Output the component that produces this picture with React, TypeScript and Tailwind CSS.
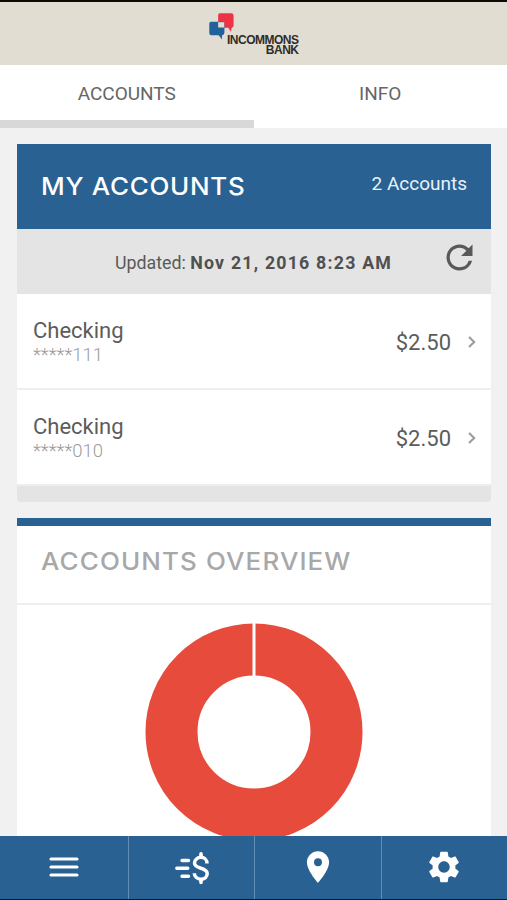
import { MdPlace, MdRefresh, MdSettings } from "react-icons/md";

const accounts = [
  { name: "Checking", number: "*****111", balance: "$2.50" },
  { name: "Checking", number: "*****010", balance: "$2.50" },
];

const BankLogo = () => (
  <div className="relative w-[92px] h-[44px]">
    <svg viewBox="0 0 28 30" className="absolute left-px top-0 w-[27px] h-[29px]">
      <path d="M11 .3h12q2.500 0 2.500 2.500v10q0 2-2 2.500l-.8 4-2.700-4H11q-1.500 0-1.500-2V2.300q0-2 1.500-2z" fill="#ef3346" />
      <path d="M2 9h12q2 0 2 2v9q0 2.500-2 3h-.5v4.500l-3.500-4.500H2.500Q.3 23 .3 21V11q0-2 1.700-2z" fill="#22629a" />
      <path d="M9.500 9.500h6.300v5.500H9.500z" fill="#e1ddd3" />
    </svg>
    <div className="absolute right-px top-[22px] flex flex-col items-end font-['Liberation_Sans',sans-serif] font-bold text-[12px] tracking-[-0.5px] text-[#302c28]">
      <p className="h-[10px] leading-[10px]">INCOMMONS</p>
      <p className="h-[10px] leading-[10px]">BANK</p>
    </div>
  </div>
);

const MenuIcon = () => (
  <svg viewBox="0 0 30 20" className="w-[30px] h-[20px] mb-0.5" stroke="white" strokeWidth="3.100" strokeLinecap="round">
    <path d="M2 2h26M2 10h26M2 18h26" />
  </svg>
);

const TransferIcon = () => (
  <svg viewBox="0 0 36 34" className="w-[36px] h-[34px]" fill="none" stroke="white" strokeLinecap="round">
    <path d="M9 9.500h6.500M3.800 17.300h11M9 25.200h6.500" strokeWidth="3.400" />
    <path d="M34 12.500C34 9 31.500 6.300 28 6.300S21.500 8.800 21.500 12c0 6.500 12.700 4 12.700 10.500 0 3.300-2.700 5.700-6.200 5.700s-6.700-2.500-6.700-6" strokeWidth="3.500" strokeLinecap="butt" />
    <path d="M28 2.800v3M28 28.500v3" strokeWidth="3.600" />
  </svg>
);

const Chevron = () => (
  <svg viewBox="0 0 8 12" className="w-[8px] h-[12px]" fill="none" stroke="#9a9a9a" strokeWidth="2">
    <path d="M1 1l5.200 5L1 11" />
  </svg>
);

const AccountRow: React.FC<{ name: string; number: string; balance: string }> = ({ name, number, balance }) => (
  <div className="flex items-center justify-between h-[96px] pt-[2px] pl-4 pr-[15px] bg-white border-b-2 border-[#eeeeee]">
    <div>
      <p className="text-[22px] leading-[25px] text-[#5c5c5c]">{name}</p>
      <p className="text-[18.500px] leading-[24px] font-light text-[#9c9c9c]">{number}</p>
    </div>
    <div className="flex items-center gap-[17px]">
      <span className="text-[22px] text-[#5c5c5c]">{balance}</span>
      <Chevron />
    </div>
  </div>
);

const OverviewChart = () => (
  <svg viewBox="0 0 218 218" className="w-[218px] h-[218px]">
    <circle cx="109" cy="109" r="82.500" fill="none" stroke="#e64b3b" strokeWidth="52" />
    <path d="M109 0v54" stroke="white" strokeWidth="3" />
  </svg>
);

const BottomNav = () => (
  <nav className="shrink-0 h-[64px] grid grid-cols-[128.500px_126px_127px_1fr] bg-[#286192] border-b border-[#0b1c2b] text-white">
    <button aria-label="Menu" className="flex items-center justify-center border-r border-[#5f8db5]">
      <MenuIcon />
    </button>
    <button aria-label="Transfers" className="flex items-center justify-center border-r border-[#5f8db5]">
      <TransferIcon />
    </button>
    <button aria-label="Locations" className="flex items-center justify-center border-r border-[#5f8db5]">
      <MdPlace size={38} className="mb-0.5" />
    </button>
    <button aria-label="Settings" className="flex items-center justify-center">
      <MdSettings size={38} className="mb-0.5" />
    </button>
  </nav>
);

export default function App() {
  return (
    <div className="flex flex-col w-[507px] h-[900px] overflow-hidden bg-[#f1f1f1] font-[Roboto,sans-serif]">
      <header className="shrink-0 flex justify-center h-[65px] pt-[11px] bg-[#e1ddd3] border-t-2 border-[#0d0a08]">
        <BankLogo />
      </header>

      <div className="shrink-0 grid grid-cols-2 h-[63px] bg-white text-[19px] text-[#666666] text-center">
        <div className="h-[63px] pt-px leading-[55px] border-b-8 border-[#d8d8d8]">ACCOUNTS</div>
        <div className="pt-px leading-[55px]">INFO</div>
      </div>

      <main className="flex-1 min-h-0 overflow-hidden px-4 pt-4">
        <section className="ml-px">
          <div className="flex justify-between h-[85px] px-6 bg-[#286192] text-white">
            <h2 className="origin-left scale-x-106 font-[Inter,sans-serif] font-medium text-[24.500px] leading-[85px] tracking-[0.650px] whitespace-nowrap">MY ACCOUNTS</h2>
            <span className="text-[19px] leading-[79px] text-[#e8f1fa]">2 Accounts</span>
          </div>
          <div className="flex items-center h-[65px] bg-[#e4e4e4] text-[#595959]">
            <p className="flex-1 pl-[98px] pt-[3px] text-[17.800px] whitespace-nowrap">
              Updated: <b className="tracking-[1.200px] text-[#505050]">Nov 21, 2016 8:23 AM</b>
            </p>
            <MdRefresh size={39} className="mr-3 mb-2" />
          </div>
          {accounts.map((account) => (
            <AccountRow key={account.number} {...account} />
          ))}
          <div className="h-4 bg-[#e4e4e4] rounded-b-sm" />
        </section>

        <section className="ml-px mt-4 bg-white border-t-8 border-[#286192]">
          <div className="h-[79px] px-6 border-b-2 border-[#eeeeee]">
            <h2 className="origin-left scale-x-106 w-fit font-[Inter,sans-serif] font-medium text-[24.500px] leading-[70px] tracking-[1.050px] text-[#a8a8a8] whitespace-nowrap">ACCOUNTS OVERVIEW</h2>
          </div>
          <div className="flex justify-center pt-[18px] pb-4">
            <OverviewChart />
          </div>
        </section>
      </main>

      <BottomNav />
    </div>
  );
}
